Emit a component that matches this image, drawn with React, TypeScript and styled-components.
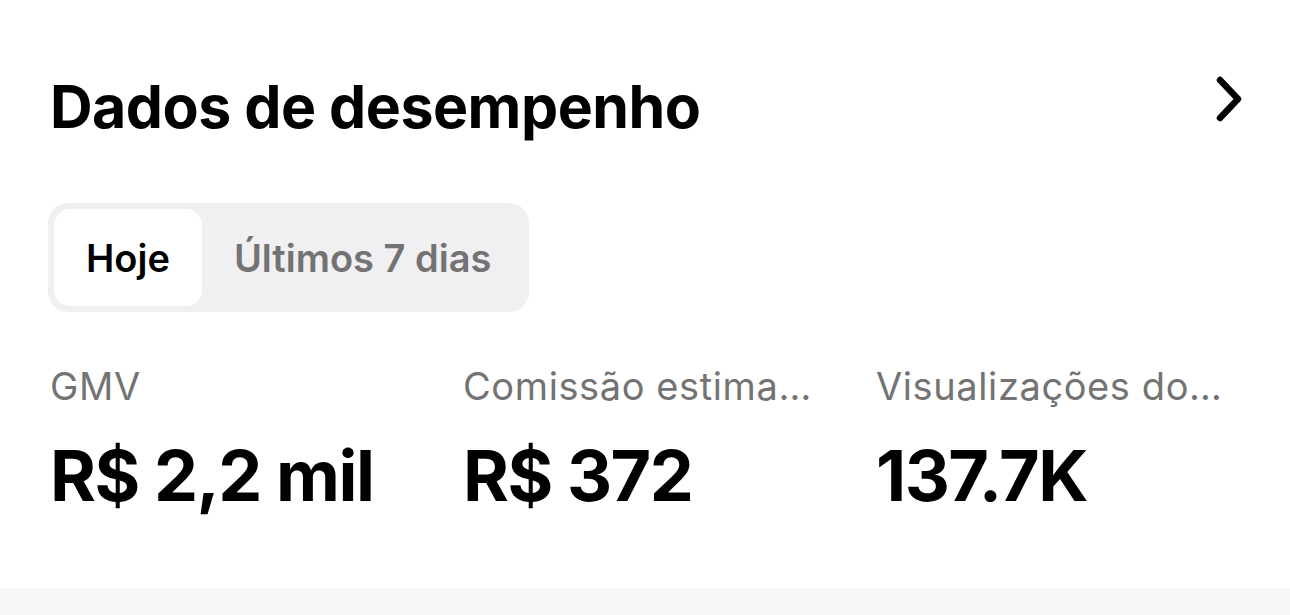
import React, { useState } from 'react';
import styled, { createGlobalStyle } from 'styled-components';

const GlobalStyle = createGlobalStyle`
  html, body {
    margin: 0;
    padding: 0;
    background: #f7f7f7;
    font-family: Inter, "Liberation Sans", sans-serif;
    -webkit-font-smoothing: antialiased;
  }
`;

const Card = styled.section`
  background: #ffffff;
  height: 588px;
  box-sizing: border-box;
  padding: 70px 50px 0 50px;
`;

const Header = styled.div`
  display: flex;
  align-items: center;
  justify-content: space-between;
  height: 72px;
`;

const Title = styled.h2`
  margin: 0;
  font-size: 59px;
  font-weight: 700;
  letter-spacing: -0.5px;
  color: #000;
`;

const ChevronButton = styled.button`
  border: 0;
  background: none;
  padding: 0;
  margin-right: -4px;
  margin-bottom: 15px;
  display: flex;
  align-items: center;
  cursor: pointer;
`;

const Segmented = styled.div`
  display: inline-flex;
  margin: 61px 0 0 -2px;
  padding: 6px;
  background: #f0f0f2;
  border-radius: 20px;
`;

const Segment = styled.button<{ $active: boolean }>`
  border: 0;
  height: 97px;
  padding: 0 32px;
  border-radius: 16px;
  font-family: inherit;
  font-size: 38px;
  font-weight: 600;
  background: ${(p) => (p.$active ? '#ffffff' : 'transparent')};
  color: ${(p) => (p.$active ? '#000000' : '#737373')};
  cursor: pointer;
`;

const Metrics = styled.div`
  display: grid;
  grid-template-columns: repeat(3, 356px);
  column-gap: 57px;
  margin-top: 50px;
`;

const Metric = styled.div`
  display: flex;
  flex-direction: column;
  min-width: 0;
`;

const Label = styled.div`
  font-size: 38px;
  font-weight: 400;
  letter-spacing: 0.6px;
  color: #737373;
  white-space: nowrap;
  overflow: hidden;
  text-overflow: ellipsis;
  line-height: 48px;
`;

const Value = styled.div`
  margin-top: 26px;
  font-size: 70px;
  font-weight: 700;
  letter-spacing: -1.5px;
  color: #000;
  line-height: 80px;
`;

const metrics = [
  { label: 'GMV', value: 'R$ 2,2 mil' },
  { label: 'Comissão estimada', value: 'R$ 372' },
  { label: 'Visualizações do vídeo', value: '137.7K' },
];

export default function App() {
  const [tab, setTab] = useState(0);
  return (
    <>
      <GlobalStyle />
      <Card>
        <Header>
          <Title>Dados de desempenho</Title>
          <ChevronButton aria-label="Ver mais">
            <svg width="34" height="50" viewBox="0 0 34 50">
              <path
                d="M10 6 L28 25 L10 44"
                fill="none"
                stroke="#000"
                strokeWidth="6.5"
                strokeLinecap="round"
                strokeLinejoin="round"
              />
            </svg>
          </ChevronButton>
        </Header>
        <Segmented>
          {['Hoje', 'Últimos 7 dias'].map((t, i) => (
            <Segment key={t} $active={tab === i} onClick={() => setTab(i)}>
              {t}
            </Segment>
          ))}
        </Segmented>
        <Metrics>
          {metrics.map((m) => (
            <Metric key={m.label}>
              <Label>{m.label}</Label>
              <Value>{m.value}</Value>
            </Metric>
          ))}
        </Metrics>
      </Card>
    </>
  );
}
